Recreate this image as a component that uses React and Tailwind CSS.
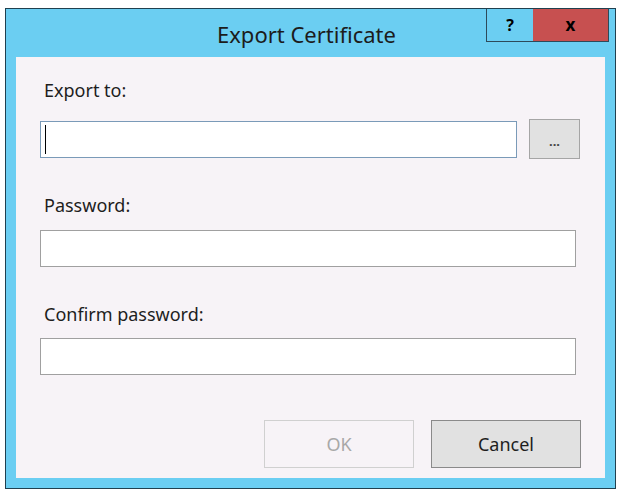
export default function App() {
    return (
        <div className="w-[621px] h-[495px] bg-white pt-[8px] pl-[5px]" style={{ fontFamily: '"Noto Sans", "Open Sans", sans-serif' }}>
            {/* Window frame */}
            <div className="w-[611px] h-[481px] border border-[#20404f] bg-[#6bcef2] flex flex-col">
                {/* Title bar */}
                <div className="relative h-[48px] shrink-0">
                    <div className="absolute left-0 right-[8px] top-[11px] text-center text-[22px] leading-[28px] text-[#1c1c1c]">
                        Export Certificate
                    </div>
                    <div className="absolute top-0 right-[6px] flex h-[33px]">
                        <div className="w-[47px] border-l border-b border-[#2d4a5a] flex items-center justify-center text-[16px] font-bold text-black">
                            ?
                        </div>
                        <div className="w-[76px] bg-[#c75050] border-b border-r border-[#2d4a5a] flex items-center justify-center text-[17px] font-bold text-black">
                            x
                        </div>
                    </div>
                </div>

                {/* Client area */}
                <div className="flex-1 mx-[10px] mb-[10px] bg-[#f7f3f7] px-[24px] pt-[21px] text-[18px] text-[#1e1e1e]">
                    <div className="pl-[4px] leading-[24px]">Export to:</div>
                    <div className="flex gap-[12px] mt-[17px] items-center">
                        <div className="w-[477px] h-[37px] bg-white border border-[#7a9ab8] flex items-center pl-[4px]">
                            <div className="w-[1px] h-[29px] bg-black"></div>
                        </div>
                        <div className="w-[51px] h-[40px] bg-[#e1e1e1] border border-[#a5a5a5] flex items-center justify-center text-[13px] font-bold text-[#444] leading-none pt-[4px]">
                            ...
                        </div>
                    </div>

                    <div className="pl-[4px] leading-[24px] mt-[34px]">Password:</div>
                    <div className="w-[536px] h-[37px] bg-white border border-[#a0a0a0] mt-[13px]"></div>

                    <div className="pl-[4px] leading-[24px] mt-[35px]">Confirm password:</div>
                    <div className="w-[536px] h-[37px] bg-white border border-[#a0a0a0] mt-[12px]"></div>

                    <div className="flex justify-end gap-[17px] mt-[45px]">
                        <div className="w-[150px] h-[48px] border border-[#d0d0d0] flex items-center justify-center text-[#a8a8a8]">
                            OK
                        </div>
                        <div className="w-[150px] h-[48px] bg-[#e1e1e1] border border-[#8a8a8a] flex items-center justify-center">
                            Cancel
                        </div>
                    </div>
                </div>
            </div>
        </div>
    )
}
